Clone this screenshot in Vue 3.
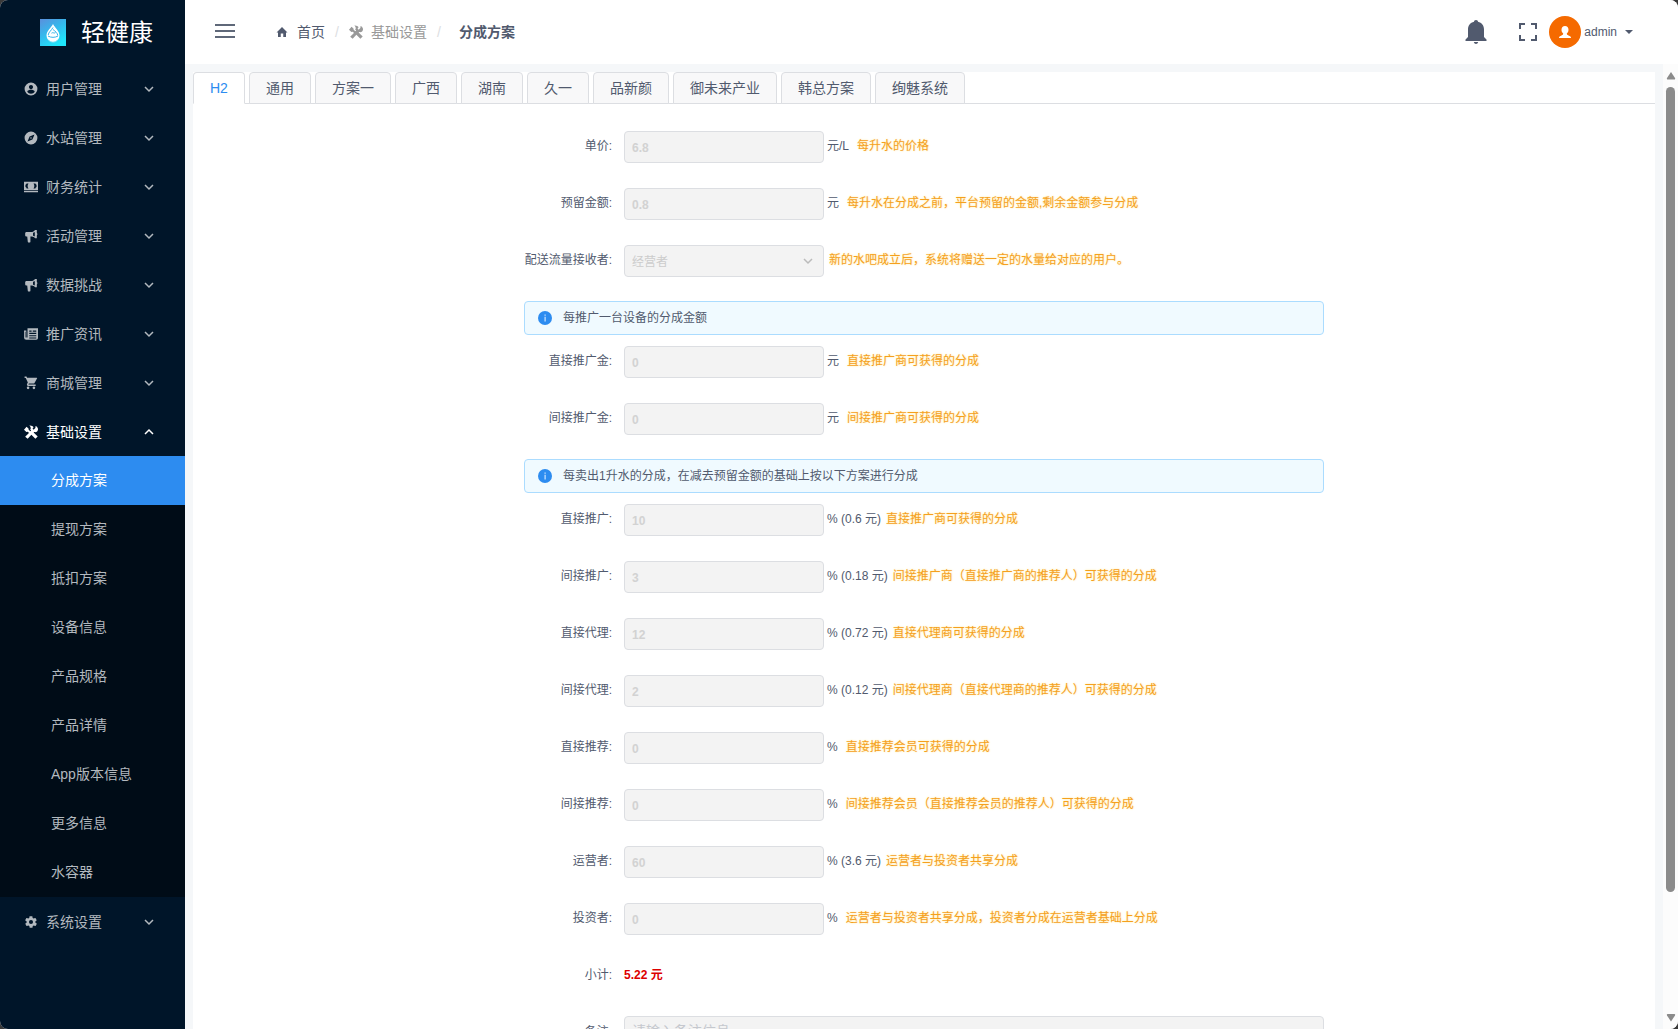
<script setup>
const icons = {
  user: 'M12 1a11 11 0 1 0 0 22 11 11 0 0 0 0-22zm0 4c2 0 3.500 1.600 3.500 3.600S14 12.400 12 12.400 8.500 10.600 8.500 8.600 10 5 12 5zm0 15c-2.700 0-5-1.300-6.400-3.400.1-2.100 4.300-3.200 6.400-3.200s6.300 1.100 6.400 3.200C17 18.700 14.700 20 12 20z',
  compass: 'M12 10.700a1.300 1.300 0 1 0 0 2.600 1.300 1.300 0 0 0 0-2.600zM12 1a11 11 0 1 0 0 22 11 11 0 0 0 0-22zm2.400 13.400L6 18l3.600-8.400L18 6l-3.600 8.400z',
  cash: 'M0 3h24v14H0zM4.500 6A3 3 0 0 1 2.500 8v4a3 3 0 0 1 2 2.500h3.200c-2-2.500-2-6 0-8.500zM19.500 6h-3.200c2 2.500 2 6 0 8.500h3.200a3 3 0 0 1 2-2.500V8a3 3 0 0 1-2-2zM0 18.300h24V21H0z',
  horn: 'M2 7.500C2 6 3 5 4.500 5H12c3 0 5.500-1.500 7-3.500h3V16h-3c-1.500-2-3-3-5.500-3.200H11V22a1 1 0 0 1-1 1H7.500a1 1 0 0 1-1-1l-1-9H4.500C3 13 2 12 2 10.500zM15.500 6.500v5c1 .3 2 .8 3 1.500V5c-1 .7-2 1.200-3 1.500zM22 7c1.300.6 1.300 3.400 0 4z',
  news: 'M6 2h18v17a3 3 0 0 1-3 3H4a4 4 0 0 1-4-4V6h4v12h2zM9 6v2h4V6zm6 0v2h6V6zM9 10v2h12v-2zm0 4v2h12v-2zm0 4v1.500h12V18zM1.500 8v10h1V8z',
  cart: 'M7 18a2 2 0 1 0 0 4.500A2 2 0 0 0 7 18zM1 1v2.500h2L6.600 11l-1.400 2.500C4.500 15 5.500 17 7 17h13v-2.300H7.500l1-1.900h7.800c.7 0 1.400-.4 1.700-1L22.500 4c.3-.6-.1-1-.8-1H5.200L4.300 1zm16 17a2 2 0 1 0 0 4.500 2 2 0 0 0 0-4.500z',
  tools: 'M9 1C12.500 .5 15 2 16.500 4l-1.800 1.900 1.800 2.300L19.500 5l.3-3.200 2.500 1.200 1.700 3.500c.3 3.500-2 6-5.300 5.700l-1.200-.2-1 1 7 6.700-4 4-6.900-6.800-6.300 6.500L2 20.300 8.500 13.500 6.700 11.500l-2.600.7L0 8l4.400-4.800L8 6.500l-.1 1.700L11 10.600l1.200-1.100-1.600-2 1-1.500C11.500 3.800 10.800 2.300 9 1z',
  gear: 'M19.400 13c0-.3.100-.6.100-1s0-.7-.1-1l2.100-1.600c.2-.2.300-.4.100-.7l-2-3.400c-.1-.2-.4-.3-.6-.2l-2.500 1c-.5-.4-1.100-.7-1.700-1l-.4-2.600c0-.3-.2-.5-.5-.5h-4c-.2 0-.4.200-.5.400l-.4 2.700c-.6.200-1.200.600-1.700 1l-2.500-1c-.2-.1-.5 0-.6.200l-2 3.400c-.1.200 0 .5.100.7L4.600 11a8 8 0 0 0 0 2l-2.100 1.600c-.2.200-.3.400-.1.700l2 3.400c.1.200.4.300.6.200l2.500-1c.5.400 1.100.7 1.700 1l.4 2.600c0 .3.200.5.500.5h4c.2 0 .4-.2.500-.4l.4-2.700c.6-.2 1.200-.6 1.700-1l2.500 1c.2.100.5 0 .6-.2l2-3.400c.1-.2.100-.5-.1-.7zM12 15.500a3.500 3.500 0 1 1 0-7 3.500 3.500 0 0 1 0 7z',
  home: 'M9.500 22v-7h5v7H20v-9h3L12 2 1 13h3v9z',
}

const groups = [
  { name: '用户管理', icon: 'user' },
  { name: '水站管理', icon: 'compass' },
  { name: '财务统计', icon: 'cash' },
  { name: '活动管理', icon: 'horn' },
  { name: '数据挑战', icon: 'horn' },
  { name: '推广资讯', icon: 'news' },
  { name: '商城管理', icon: 'cart' },
  {
    name: '基础设置',
    icon: 'tools',
    children: ['分成方案', '提现方案', '抵扣方案', '设备信息', '产品规格', '产品详情', 'App版本信息', '更多信息', '水容器'],
  },
  { name: '系统设置', icon: 'gear' },
]

const tabs = ['H2', '通用', '方案一', '广西', '湖南', '久一', '品新颜', '御未来产业', '韩总方案', '绚魅系统']

const sections = [
  {
    rows: [
      { id: 'price', label: '单价', value: '6.8', unit: '元/L', hint: '每升水的价格' },
      { id: 'reserve', label: '预留金额', value: '0.8', unit: '元', hint: '每升水在分成之前，平台预留的金额,剩余金额参与分成' },
      { id: 'receiver', label: '配送流量接收者', value: '经营者', select: true, hint: '新的水吧成立后，系统将赠送一定的水量给对应的用户。' },
    ],
  },
  {
    title: '每推广一台设备的分成金额',
    rows: [
      { id: 'direct-fee', label: '直接推广金', value: '0', unit: '元', hint: '直接推广商可获得的分成' },
      { id: 'indirect-fee', label: '间接推广金', value: '0', unit: '元', hint: '间接推广商可获得的分成' },
    ],
  },
  {
    title: '每卖出1升水的分成，在减去预留金额的基础上按以下方案进行分成',
    rows: [
      { id: 'direct-promo', label: '直接推广', value: '10', unit: '%', amount: '(0.6 元)', hint: '直接推广商可获得的分成' },
      { id: 'indirect-promo', label: '间接推广', value: '3', unit: '%', amount: '(0.18 元)', hint: '间接推广商（直接推广商的推荐人）可获得的分成' },
      { id: 'direct-agent', label: '直接代理', value: '12', unit: '%', amount: '(0.72 元)', hint: '直接代理商可获得的分成' },
      { id: 'indirect-agent', label: '间接代理', value: '2', unit: '%', amount: '(0.12 元)', hint: '间接代理商（直接代理商的推荐人）可获得的分成' },
      { id: 'direct-ref', label: '直接推荐', value: '0', unit: '%', hint: '直接推荐会员可获得的分成' },
      { id: 'indirect-ref', label: '间接推荐', value: '0', unit: '%', hint: '间接推荐会员（直接推荐会员的推荐人）可获得的分成' },
      { id: 'operator', label: '运营者', value: '60', unit: '%', amount: '(3.6 元)', hint: '运营者与投资者共享分成' },
      { id: 'investor', label: '投资者', value: '0', unit: '%', hint: '运营者与投资者共享分成，投资者分成在运营者基础上分成' },
    ],
  },
]
</script>

<template>
  <div class="app">
    <aside class="sider">
      <div class="brand">
        <svg class="logo" viewBox="0 0 26 27" aria-hidden="true">
          <defs>
            <linearGradient id="logo-bg" x1="0" y1="0" x2="0.6" y2="1">
              <stop offset="0" stop-color="#5b8fdc" />
              <stop offset="0.5" stop-color="#35b8ec" />
              <stop offset="1" stop-color="#1fe6fb" />
            </linearGradient>
          </defs>
          <rect width="26" height="27" fill="url(#logo-bg)" />
          <path d="M13 5c2 4 6.500 7 6.500 11.500a6.500 6.500 0 0 1-13 0C6.500 12 11 9 13 5z" fill="#fff" />
          <path d="M13 8.500c-1.500 3-4.500 4.500-4.800 7.500M13 10.500c2.500 2 4.500 3.500 4.800 6M8 17c3 1.800 7 1.800 10 0M11.500 14.200c1.500-1.400 2.500.6 4-.6" fill="none" stroke="#37b4ea" stroke-width="1" />
          <path d="M8 20.500a6 6 0 0 0 10 0" fill="none" stroke="#8fe0f7" stroke-width="0.800" />
        </svg>
        <span>轻健康</span>
      </div>
      <nav>
        <template v-for="g in groups" :key="g.name">
          <button type="button" class="group" :class="{ open: g.children }">
            <svg class="glyph" viewBox="0 0 24 24" aria-hidden="true"><path :d="icons[g.icon]" fill-rule="evenodd" /></svg>
            <span class="group-name">{{ g.name }}</span>
            <svg class="chevron" viewBox="0 0 10 10" aria-hidden="true"><path :d="g.children ? 'M1 7l4-4 4 4' : 'M1 3l4 4 4-4'" /></svg>
          </button>
          <div v-if="g.children" class="submenu">
            <a v-for="(c, i) in g.children" :key="c" href="#" :class="{ active: i === 0 }">{{ c }}</a>
          </div>
        </template>
      </nav>
    </aside>

    <div class="layout">
      <header class="header">
        <button type="button" class="toggle" aria-label="折叠菜单"><i></i><i></i><i></i></button>
        <nav class="crumbs">
          <a href="#" class="home">
            <svg class="glyph" viewBox="0 0 24 24" aria-hidden="true"><path :d="icons.home" /></svg>首页
          </a>
          <span class="slash">/</span>
          <a href="#" class="mid">
            <svg class="glyph" viewBox="0 0 24 24" aria-hidden="true"><path :d="icons.tools" fill-rule="evenodd" /></svg>基础设置
          </a>
          <span class="slash">/</span>
          <strong>分成方案</strong>
        </nav>
        <button type="button" class="bell" aria-label="消息">
          <svg width="22" height="24" viewBox="0 0 22 24" aria-hidden="true"><path d="M11 0c1.200 0 2 .8 2 1.800C16.800 2.700 19 5.600 19 9.500V17l2.500 2.500V21H.5v-1.500L3 17V9.500C3 5.600 5.200 2.700 9 1.800 9 .8 9.800 0 11 0zM8.800 22h4.400c-.3 1.200-1.200 2-2.200 2s-1.900-.8-2.200-2z" /></svg>
        </button>
        <button type="button" class="full" aria-label="全屏">
          <svg width="18" height="18" viewBox="0 0 18 18" aria-hidden="true"><path d="M1 6V1H6M12 1h5V6M17 12v5H12M6 17H1V12" fill="none" stroke="#515a6e" stroke-width="2" /></svg>
        </button>
        <button type="button" class="account">
          <svg class="avatar" viewBox="0 0 32 32" aria-hidden="true">
            <circle cx="16" cy="16" r="16" fill="#f56a00" />
            <path d="M16 10c2.200 0 3.500 1.500 3.500 3.700 0 1.600-.7 3-1.700 3.800 0 1.200.5 1.500 1.700 1.900 1.600.5 2.500 1 2.500 2.600H10c0-1.600.9-2.100 2.500-2.600 1.200-.4 1.700-.7 1.700-1.900-1-.8-1.700-2.200-1.700-3.800 0-2.200 1.300-3.700 3.500-3.700z" fill="#fff" />
          </svg>
          <span>admin</span>
          <svg class="caret" width="8" height="4" viewBox="0 0 8 4" aria-hidden="true"><path d="M0 0h8L4 4z" /></svg>
        </button>
      </header>

      <div class="body">
        <main class="card">
          <div class="tabs" role="tablist">
            <button v-for="(t, i) in tabs" :key="t" type="button" role="tab" class="tab" :class="{ active: i === 0 }">{{ t }}</button>
          </div>
          <form class="form">
            <template v-for="(s, i) in sections" :key="i">
              <div v-if="s.title" class="alert">
                <svg width="14" height="14" viewBox="0 0 14 14" aria-hidden="true">
                  <circle cx="7" cy="7" r="7" fill="#2d8cf0" />
                  <path d="M6.500 3.500h1.200v1.200H6.500zM6.500 5.800h1.200v4.700H6.500z" fill="#cfe6ff" />
                </svg>
                <span>{{ s.title }}</span>
              </div>
              <div v-for="r in s.rows" :key="r.id" class="row">
                <label :for="r.id">{{ r.label }}:</label>
                <span v-if="r.select" class="select">
                  <select :id="r.id" disabled><option>{{ r.value }}</option></select>
                  <svg class="arrow" viewBox="0 0 10 10" aria-hidden="true"><path d="M1 3l4 4 4-4" /></svg>
                </span>
                <input v-else :id="r.id" type="text" :value="r.value" disabled />
                <span v-if="r.unit" class="unit" :class="{ short: !r.amount }">{{ r.unit }} {{ r.amount }}</span>
                <span class="hint">{{ r.hint }}</span>
              </div>
            </template>
            <div class="row plain">
              <span class="label">小计:</span>
              <output class="total">5.22 元</output>
            </div>
            <div class="row plain">
              <label for="remark">备注:</label>
              <textarea id="remark" rows="3" placeholder="请输入备注信息" disabled></textarea>
            </div>
          </form>
        </main>
        <div class="rail" aria-hidden="true">
          <svg width="10" height="8" viewBox="0 0 10 8"><path d="M5 0l4 6c.5 1 0 1.500-1 1.500H2c-1 0-1.500-.5-1-1.500z" /></svg>
          <div class="track"><div class="thumb"></div></div>
          <svg width="10" height="8" viewBox="0 0 10 8"><path d="M5 7.500l4-6C9.500.5 9 0 8 0H2C1 0 .5.500 1 1.500z" /></svg>
        </div>
      </div>
    </div>
  </div>
</template>

<style>
body {
  background: #3a3a3a;
}
</style>

<style scoped>
* {
  box-sizing: border-box;
}
.app {
  display: flex;
  height: 100vh;
  overflow: hidden;
  border-radius: 8px;
  background: #f5f7f9;
  color: #515a6e;
  font: 12px/18px "Liberation Sans", "Noto Sans CJK SC", sans-serif;
}
button,
input,
select,
textarea {
  margin: 0;
  font-family: inherit;
  color: inherit;
}
button {
  padding: 0;
  border: 0;
  background: none;
  line-height: 18px;
}
a {
  color: inherit;
  text-decoration: none;
}
svg {
  display: block;
  flex: none;
  fill: currentColor;
}

/* side menu */
.sider {
  flex: none;
  width: 185px;
  background: #001529;
  color: #b3b9bf;
  font-size: 14px;
}
.brand {
  display: flex;
  align-items: center;
  gap: 15px;
  height: 65px;
  padding-left: 40px;
  color: #fff;
  font-size: 24px;
}
.sider nav {
  margin-top: -1px;
}
.logo {
  width: 26px;
  height: 27px;
}
.group {
  display: flex;
  align-items: center;
  width: 100%;
  height: 49px;
  padding: 0 31px 0 24px;
  font-size: 14px;
  text-align: left;
}
.glyph {
  width: 14px;
  height: 14px;
}
.group-name {
  flex: 1;
  margin-left: 8px;
}
.group.open {
  color: #fff;
}
.chevron,
.arrow {
  width: 10px;
  height: 10px;
  fill: none;
  stroke: currentColor;
  stroke-width: 1.5;
}
.submenu {
  background: #000c17;
}
.submenu a {
  display: block;
  padding-left: 51px;
  line-height: 49px;
}
.submenu .active {
  background: #2d8cf0;
  color: #fff;
}

/* top bar */
.layout {
  display: flex;
  flex: 1;
  flex-direction: column;
  min-width: 0;
}
.header {
  display: flex;
  flex: none;
  align-items: center;
  height: 64px;
  padding: 0 45px 0 30px;
  background: #fff;
}
.toggle {
  display: flex;
  flex-direction: column;
  gap: 4px;
  width: 20px;
  padding-bottom: 2px;
}
.toggle i {
  height: 2px;
  background: #5f6879;
}
.crumbs {
  display: flex;
  flex: 1;
  align-items: center;
  margin-left: 41px;
  font-size: 14px;
}
.crumbs a {
  display: flex;
  align-items: center;
  gap: 9px;
}
.crumbs .glyph {
  width: 14px;
}
.crumbs .home .glyph {
  width: 12px;
  height: 12px;
}
.crumbs .mid {
  gap: 8px;
  color: #999;
}
.slash {
  width: 24px;
  text-align: center;
  color: #dcdee2;
}
.crumbs strong {
  margin-left: 8px;
}
.bell {
  margin-right: 32px;
}
.full {
  margin-right: 12px;
}
.account {
  display: flex;
  align-items: center;
  font-size: 12px;
}
.avatar {
  width: 32px;
  height: 32px;
  margin-right: 3px;
}
.caret {
  margin-left: 8px;
}

/* content */
.body {
  display: flex;
  flex: 1;
  min-height: 0;
}
.card {
  flex: 1;
  align-self: flex-start;
  margin: 8px;
  background: #fff;
}
.tabs {
  display: flex;
  gap: 4px;
  height: 32px;
  border-bottom: 1px solid #dcdee2;
}
.tab {
  height: 32px;
  padding: 0 16px;
  border: 1px solid #dcdee2;
  border-radius: 4px 4px 0 0;
  background: #f8f8f9;
  font-size: 14px;
}
.tab.active {
  border-bottom-color: #fff;
  background: #fff;
  color: #2d8cf0;
}
.form {
  max-width: 800px;
  margin: 0 auto;
  padding: 26px 0;
}
.row {
  display: flex;
  align-items: flex-start;
  min-height: 33px;
  margin-bottom: 24px;
  line-height: 33px;
  white-space: nowrap;
}
.row.plain {
  min-height: 32px;
}
.row label,
.label {
  width: 100px;
  padding-right: 12px;
  text-align: right;
}
.row input,
.row select {
  width: 200px;
  height: 32px;
  padding: 1px 7px 0;
  border: 1px solid #dcdee2;
  border-radius: 4px;
  background: #f3f3f3;
  color: #ccc;
  font-size: 12px;
  opacity: 1;
  appearance: none;
}
.row input {
  color: #d2d2d2;
  font-weight: bold;
}
.row input,
.select {
  margin-top: 1px;
}
.select {
  position: relative;
  display: flex;
}
.arrow {
  position: absolute;
  top: 11px;
  right: 11px;
  color: #bbb;
}
.unit {
  margin-left: 3px;
}
.hint {
  margin-left: 5px;
  color: #f5a01e;
  text-shadow: 0 0 2px #ffe48a;
}
.short + .hint {
  margin-left: 8px;
}
.total {
  color: #d00;
  font-weight: bold;
}
.row textarea {
  flex: 1;
  height: 74px;
  padding: 4px 7px;
  border: 1px solid #dcdee2;
  border-radius: 4px;
  background: #f3f3f3;
  font-size: 14px;
  line-height: 21px;
  resize: none;
}
.row textarea::placeholder {
  color: #c5c8ce;
}
.alert {
  display: flex;
  align-items: center;
  gap: 11px;
  height: 34px;
  margin-bottom: 10px;
  padding: 0 13px;
  border: 1px solid #abdcff;
  border-radius: 4px;
  background: #f0faff;
}

/* scroll rail */
.rail {
  display: flex;
  flex: none;
  flex-direction: column;
  align-items: center;
  gap: 7px;
  width: 15px;
  padding: 8px 0 7px;
  background: #fcfcfc;
  color: #8b8b8b;
}
.track {
  display: flex;
  flex: 1;
  flex-direction: column;
}
.track::after {
  flex: 1;
  content: "";
}
.thumb {
  flex: 7;
  width: 9px;
  border-radius: 5px;
  background: #8b8b8b;
}
</style>
